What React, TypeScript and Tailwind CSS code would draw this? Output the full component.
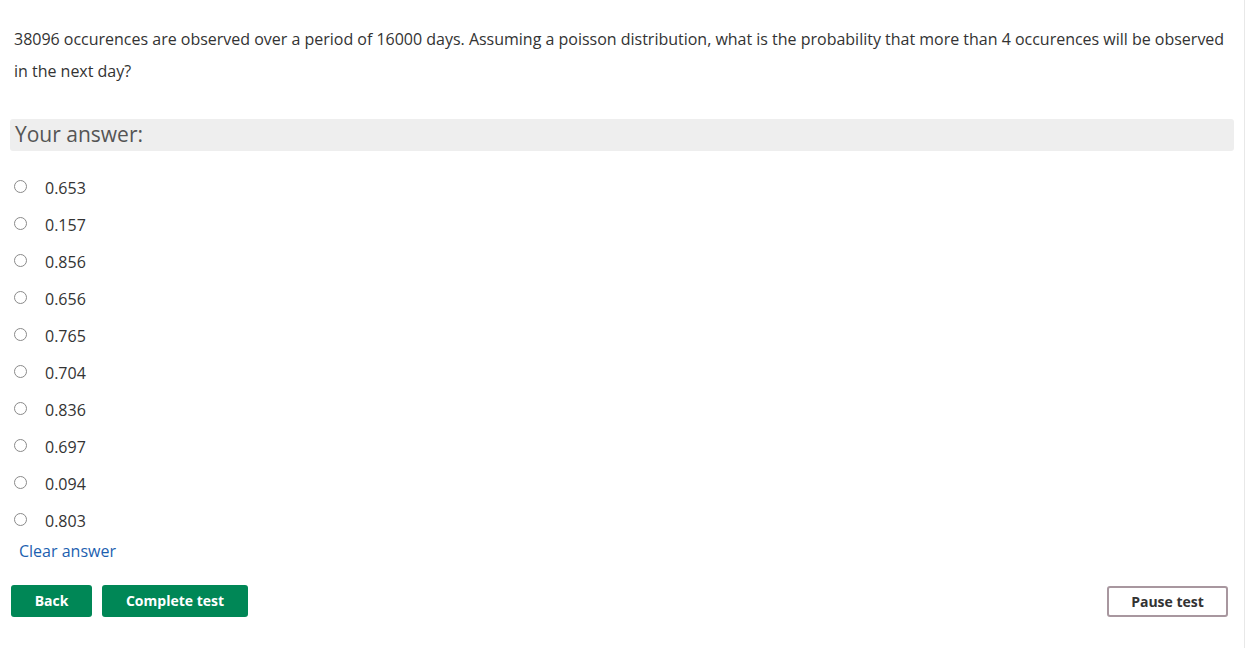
const options = ['0.653', '0.157', '0.856', '0.656', '0.765', '0.704', '0.836', '0.697', '0.094', '0.803'];

export default function App() {
    return (
        <div className="flex min-h-[648px] w-full bg-white font-['Open_Sans',sans-serif] text-[#333]">
            <div className="w-[1245px] border-r border-[#e8e8e8] pl-[10px] pr-[10px] pt-[23px]">
                {/* Question */}
                <p className="pl-[4px] pr-[2px] text-[16px] leading-[32px] tracking-[-0.01px]">
                    38096 occurences are observed over a period of 16000 days. Assuming a poisson distribution, what is the probability that more than 4 occurences will be observed in the next day?
                </p>

                <div className="mt-[32px] flex h-[32px] items-center rounded-[3px] bg-[#eeeeee] pl-[5px] text-[21px] text-[#555]">
                    Your answer:
                </div>

                {/* Options */}
                <div className="mt-[18px]">
                    {options.map((opt) => (
                        <label key={opt} className="flex h-[37px] items-center">
                            <span className="ml-[4px] mb-[3px] h-[13px] w-[13px] rounded-full border border-[#8a8a8a] bg-white" />
                            <span className="ml-[18px] text-[16px] text-[#333]">{opt}</span>
                        </label>
                    ))}
                </div>

                <div className="pl-[9px] text-[16px] leading-[24px] text-[#1c5fb0]">Clear answer</div>

                {/* Actions */}
                <div className="mt-[22px] flex items-start justify-between">
                    <div className="flex gap-[10px] pl-[1px]">
                        <button className="h-[32px] w-[81px] rounded-[3px] bg-[#008756] pb-[1px] text-[14px] font-bold text-white">
                            Back
                        </button>
                        <button className="h-[32px] w-[146px] rounded-[3px] bg-[#008756] pb-[1px] text-[14px] font-bold text-white">
                            Complete test
                        </button>
                    </div>
                    <button className="mr-[6px] mt-[1px] h-[31px] w-[121px] rounded-[3px] border-2 border-[#a8979f] bg-white pb-[1px] text-[14px] font-bold text-[#333]">
                        Pause test
                    </button>
                </div>
            </div>
        </div>
    );
}
